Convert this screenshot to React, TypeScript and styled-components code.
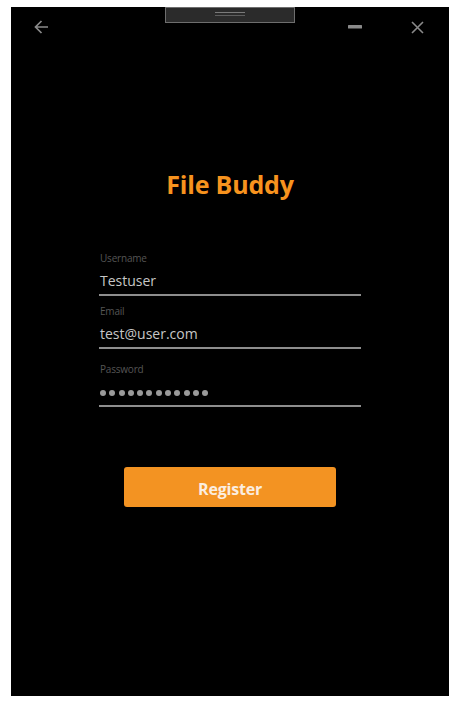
import React from "react";
import styled, { createGlobalStyle } from "styled-components";

const Global = createGlobalStyle`
  html, body { margin: 0; padding: 0; background: #ffffff; }
  body { font-family: "Open Sans", "Noto Sans", sans-serif; }
`;

const Page = styled.div`
  padding: 7px 9px 10px 11px;
`;

const Window = styled.div`
  width: 438px;
  height: 689px;
  background: #000;
  display: flex;
  flex-direction: column;
  align-items: center;
`;

const TitleBar = styled.div`
  width: 100%;
  height: 40px;
  display: grid;
  grid-template-columns: 1fr 130px 1fr;
`;

const Left = styled.div`
  display: flex;
  justify-content: flex-start;
`;

const Right = styled.div`
  display: flex;
  justify-content: flex-end;
`;

const IconButton = styled.div<{ $w: number }>`
  width: ${(p) => p.$w}px;
  height: 40px;
  display: flex;
  align-items: center;
  justify-content: center;
  color: #8a8a8a;
`;

const Handle = styled.div`
  height: 16px;
  box-sizing: border-box;
  border: 1px solid #6e6e6e;
  background: #2b2b2b;
  display: flex;
  align-items: center;
  justify-content: center;
  padding-bottom: 2px;
`;

const Grip = styled.div`
  width: 30px;
  height: 4px;
  box-sizing: border-box;
  border-top: 1px solid #7a7a7a;
  border-bottom: 1px solid #5e5e5e;
`;

const Title = styled.h1`
  margin: 121px 0 0;
  font-size: 25px;
  line-height: 32px;
  font-weight: 700;
  color: #f7931e;
  letter-spacing: -0.2px;
`;

const Form = styled.div`
  width: 262px;
  margin-top: 51px;
  display: flex;
  flex-direction: column;
`;

const Field = styled.div<{ $gap: number }>`
  display: flex;
  flex-direction: column;
  margin-bottom: ${(p) => p.$gap}px;
`;

const Label = styled.div`
  font-size: 10px;
  line-height: 14px;
  color: #555;
  padding-left: 1px;
  letter-spacing: -0.2px;
`;

const Value = styled.div`
  font-size: 14px;
  line-height: 22px;
  height: 22px;
  color: #c6c6c6;
  padding: 5px 0 2px 1px;
  border-bottom: 2px solid #8e8e8e;
  display: flex;
  align-items: center;
`;

const Dots = styled.span`
  display: flex;
  gap: 3.3px;
  padding-top: 1px;
`;

const Dot = styled.span`
  width: 6px;
  height: 6px;
  border-radius: 50%;
  background: #9a9a9a;
`;

const Button = styled.button`
  margin-top: 60px;
  width: 212px;
  height: 40px;
  border: none;
  border-radius: 3px;
  background: #f39322;
  color: #fbeee0;
  font-family: "Open Sans", "Noto Sans", sans-serif;
  font-size: 16px;
  font-weight: 700;
  letter-spacing: -0.2px;
  padding: 3px 0 0;
`;

export default function App() {
  return (
    <>
      <Global />
      <Page>
        <Window>
          <TitleBar>
            <Left>
              <IconButton $w={60}>
                <svg width="15" height="14" viewBox="0 0 15 14" fill="none" stroke="currentColor" strokeWidth="1.7">
                  <path d="M14 7H1.5M7.5 1L1.5 7l6 6" />
                </svg>
              </IconButton>
            </Left>
            <Handle>
              <Grip />
            </Handle>
            <Right>
              <IconButton $w={62}>
                <svg width="14" height="4" viewBox="0 0 14 4">
                  <rect x="0" y="0" width="14" height="3.6" rx="0.5" fill="currentColor" />
                </svg>
              </IconButton>
              <IconButton $w={63}>
                <svg width="13" height="13" viewBox="0 0 13 13" fill="none" stroke="currentColor" strokeWidth="1.6">
                  <path d="M1 1l11 11M12 1L1 12" />
                </svg>
              </IconButton>
            </Right>
          </TitleBar>
          <Title>File Buddy</Title>
          <Form>
            <Field $gap={8}>
              <Label>Username</Label>
              <Value>Testuser</Value>
            </Field>
            <Field $gap={13}>
              <Label>Email</Label>
              <Value>test@user.com</Value>
            </Field>
            <Field $gap={0}>
              <Label>Password</Label>
              <Value aria-label="password">
                <Dots>
                  {Array.from({ length: 12 }).map((_, i) => (
                    <Dot key={i} />
                  ))}
                </Dots>
              </Value>
            </Field>
          </Form>
          <Button>Register</Button>
        </Window>
      </Page>
    </>
  );
}
